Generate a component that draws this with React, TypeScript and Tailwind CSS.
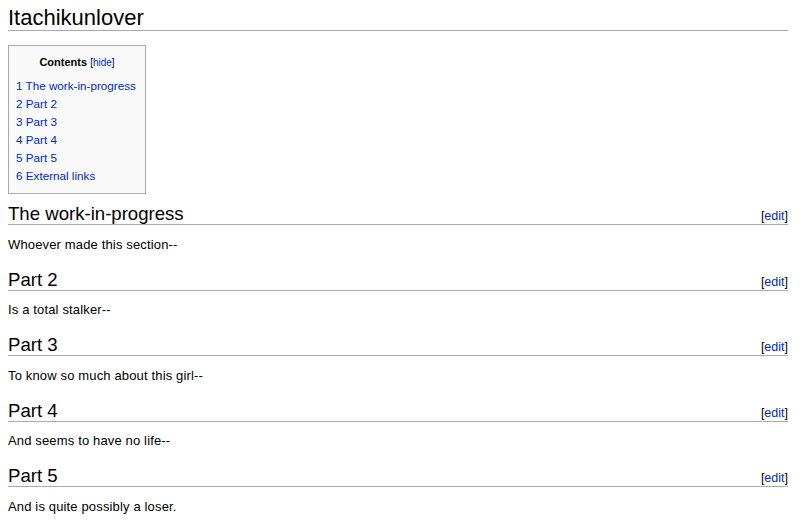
import React from 'react';

const tocItems = [
  '1 The work-in-progress',
  '2 Part 2',
  '3 Part 3',
  '4 Part 4',
  '5 Part 5',
  '6 External links',
];

const sections = [
  { title: 'The work-in-progress', text: 'Whoever made this section--' },
  { title: 'Part 2', text: 'Is a total stalker--' },
  { title: 'Part 3', text: 'To know so much about this girl--' },
  { title: 'Part 4', text: 'And seems to have no life--' },
  { title: 'Part 5', text: 'And is quite possibly a loser.' },
];

const App = () => {
  return (
    <div className="min-h-screen w-[800px] h-[520px] overflow-hidden bg-white pl-[8px] pr-[12px] pt-[6px] text-black font-['Liberation_Sans',Arial,sans-serif]">
      {/* page title */}
      <h1 className="text-[22px] leading-[24px] font-normal border-b border-[#aaaaaa]">
        Itachikunlover
      </h1>

      {/* table of contents */}
      <div className="mt-[14px] w-[138px] border border-[#aaaaaa] bg-[#f9f9f9] pt-[7px] pb-[8px] pl-[7px]">
        <div className="text-center text-[11px] leading-[18px] pr-[7px]">
          <span className="font-bold">Contents</span>{' '}
          <span className="text-[10px]">
            [<a className="text-[#002bb8]">hide</a>]
          </span>
        </div>
        <ul className="mt-[5px] text-[11.7px] leading-[18px]">
          {tocItems.map((item) => (
            <li key={item} className="text-[#002bb8] whitespace-nowrap">
              {item}
            </li>
          ))}
        </ul>
      </div>

      {/* sections */}
      <div className="mt-[9px]">
        {sections.map((s, i) => (
          <div key={s.title} className={i === 0 ? '' : 'mt-[15px]'}>
            <div className="flex items-baseline justify-between border-b border-[#aaaaaa]">
              <h2 className="text-[18.6px] leading-[21px] font-normal">{s.title}</h2>
              <span className="text-[12.5px] leading-none">
                [<a className="text-[#002bb8]">edit</a>]
              </span>
            </div>
            <p className="mt-[10.5px] text-[13px] leading-[18px] tracking-[0.15px]">{s.text}</p>
          </div>
        ))}
      </div>
    </div>
  );
};

export default App;
